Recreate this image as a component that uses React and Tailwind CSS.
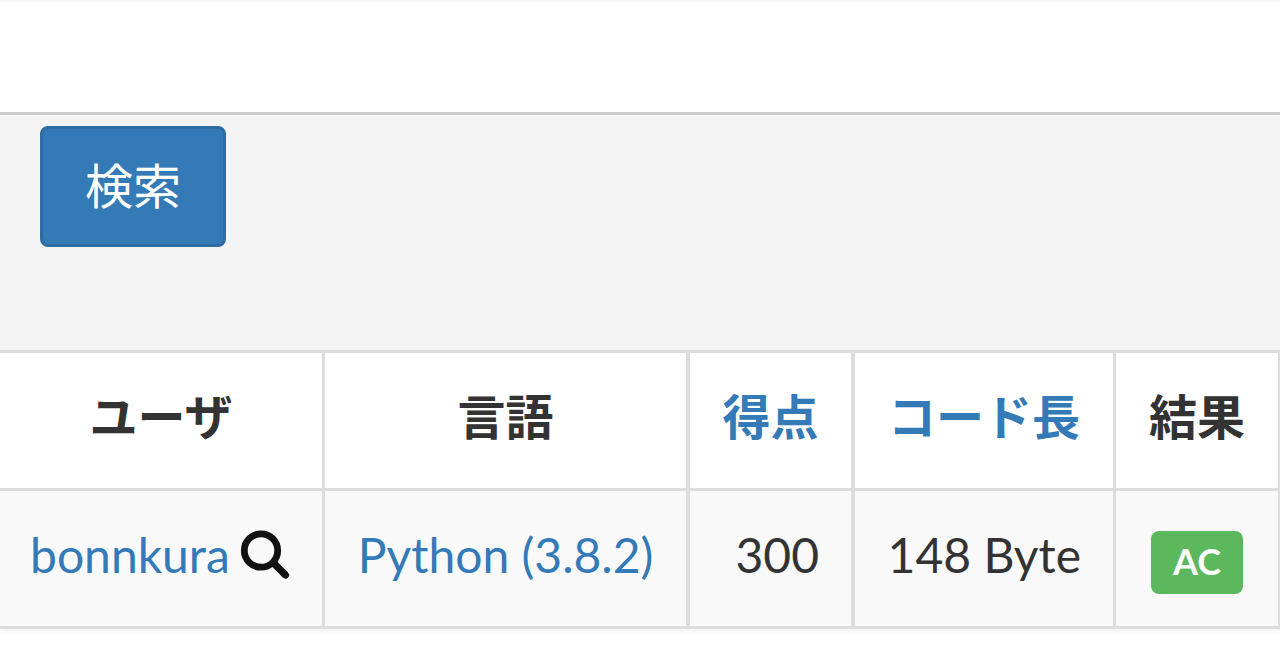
import React from "react";

const submissions = [
  {
    id: 1,
    user: "bonnkura",
    language: "Python (3.8.2)",
    score: 300,
    length: "148 Byte",
    result: "AC",
  },
];

const SearchIcon = () => (
  <svg viewBox="0 0 50 50" className="h-[50px] w-[50px]" fill="none" stroke="#111" aria-hidden="true">
    <circle cx="21" cy="20.5" r="16.7" strokeWidth="6.8" />
    <path d="M32 31.5L45.5 45" strokeWidth="7.4" />
    <path d="M44 43.5L45.6 45.1" strokeWidth="7" strokeLinejoin="round" strokeLinecap="round" />
  </svg>
);

const App = () => {
  return (
    <div className="min-h-screen w-full overflow-hidden bg-white font-['Lato','Noto_Sans_CJK_JP',sans-serif] text-5xl leading-[69px] text-[#333]">
      <header className="h-28 border-t-2 border-[#f5f5f5]"></header>

      <main>
        <form
          className="h-[238px] border-t-3 border-[#ccc] bg-[#f4f4f4] px-10 pt-[11px]"
          onSubmit={(e) => e.preventDefault()}
        >
          <button
            type="submit"
            className="block rounded-lg border-3 border-[#2e6da4] bg-[#337ab7] px-[42px] pt-[22px] pb-6 text-white"
          >
            検索
          </button>
        </form>

        <table className="w-full table-fixed border-separate border-spacing-0 border-t-3 border-[#ddd] shadow-[0_3px_5px_rgba(0,0,0,0.05)]">
          <colgroup>
            <col className="w-[325px]" />
            <col className="w-[365px]" />
            <col className="w-[165px]" />
            <col className="w-[261px]" />
            <col className="w-[164px]" />
          </colgroup>
          <thead>
            <tr className="whitespace-nowrap text-center font-bold">
              <th className="border-r-3 border-b-3 border-[#ddd] pt-[29px] pb-[37px]">ユーザ</th>
              <th className="border-r-4 border-b-3 border-[#ddd] pt-[29px] pb-[37px]">言語</th>
              <th className="border-r-4 border-b-3 border-[#ddd] pt-[29px] pb-[37px]">
                <a href="#score" className="text-[#337ab7]">得点</a>
              </th>
              <th className="border-r-3 border-b-3 border-[#ddd] pt-[29px] pb-[37px]">
                <a href="#length" className="text-[#337ab7]">コード長</a>
              </th>
              <th className="border-r-2 border-b-3 border-[#ddd] pt-[29px] pb-[37px]">結果</th>
            </tr>
          </thead>
          <tbody>
            {submissions.map((item) => (
              <tr key={item.id} className="whitespace-nowrap bg-[#f9f9f9]">
                <td className="border-r-3 border-b-3 border-[#ddd] pt-[29px] pb-[37px] pl-[30px]">
                  <div className="flex items-center gap-[10px]">
                    <a href="#user" className="text-[#337ab7]">{item.user}</a>
                    <a href="#search" aria-label="Search user">
                      <SearchIcon />
                    </a>
                  </div>
                </td>
                <td className="border-r-4 border-b-3 border-[#ddd] pt-[29px] pb-[37px] text-center">
                  <a href="#language" className="text-[#337ab7]">{item.language}</a>
                </td>
                <td className="border-r-4 border-b-3 border-[#ddd] pt-[29px] pr-8 pb-[37px] text-right">{item.score}</td>
                <td className="border-r-3 border-b-3 border-[#ddd] pt-[29px] pr-8 pb-[37px] text-right">{item.length}</td>
                <td className="border-r-2 border-b-3 border-[#ddd]">
                  <div className="flex justify-center pt-[7px]">
                    <span className="rounded-lg bg-[#5cb85c] px-[22px] pt-3 pb-[15px] text-4xl leading-9 font-bold text-white">
                      {item.result}
                    </span>
                  </div>
                </td>
              </tr>
            ))}
          </tbody>
        </table>
      </main>
    </div>
  );
};

export default App;
